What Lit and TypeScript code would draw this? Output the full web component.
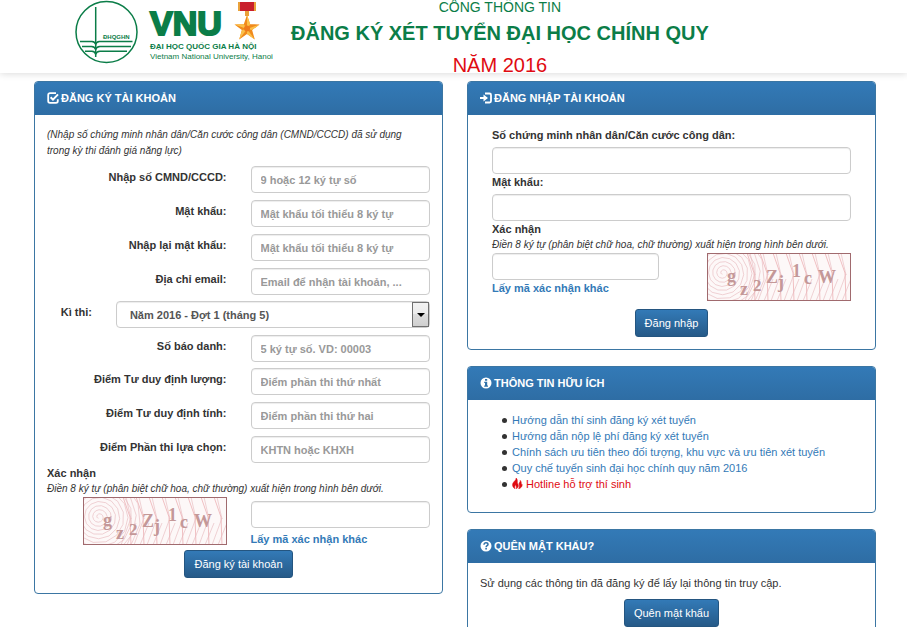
import { LitElement, html, svg, css } from "lit";
import { customElement, property } from "lit/decorators.js";

const icons = {
  check: svg`<path d="M9 1.200H3A1.800 1.800 0 0 0 1.200 3v6A1.800 1.800 0 0 0 3 10.800h6A1.800 1.800 0 0 0 10.800 9V7.200" fill="none" stroke="currentColor" stroke-width="1.800"/><path d="M3.600 5.200l2.400 2.400 5-5.200" fill="none" stroke="currentColor" stroke-width="2"/>`,
  login: svg`<path d="M5 1.500h4.500a1.500 1.500 0 0 1 1.500 1.500v6a1.500 1.500 0 0 1-1.500 1.500H5" fill="none" stroke="currentColor" stroke-width="1.800"/><path d="M0 4.900h3.500V2.500L8 6 3.500 9.500V7.100H0z" fill="currentColor"/>`,
  info: svg`<circle cx="6" cy="6" r="5.500" fill="currentColor"/><path d="M5 2h2.200v1.700H5zM4.200 4.700h3v3.700H8V9.700H4.200V8.400H5V6h-.8z" fill="#3071a9"/>`,
  question: svg`<circle cx="6" cy="6" r="5.500" fill="currentColor"/><path d="M4 4.700C4 3.300 4.800 2.700 6 2.700s2 .7 2 1.700c0 1.300-1.900 1.300-1.900 2.800" fill="none" stroke="#3071a9" stroke-width="1.500"/><path d="M5.300 8h1.600v1.600H5.300z" fill="#3071a9"/>`,
  fire: svg`<path d="M4.500 0C5 2 2.200 3.500 1 5.600 0 7.600.8 10.200 3.400 11.700 2.500 9.700 3 8.600 4.200 7.400c0 1.600.9 2 .5 4.400C7 10.800 7.500 8.400 6.300 6.400 5.200 4.600 6.700 2 4.500 0zM9 2.600c.3 1.700-1.500 2.400-1.300 4 .2 1.500.9 2.600-.4 5.200C10 11 11.600 9 10.900 6.600 10.700 7.300 10.400 7.600 10 7.800 10.300 5.800 10.300 4 9 2.600z" fill="currentColor" stroke="currentColor" stroke-width=".6"/>`,
};

type IconName = keyof typeof icons;

const icon = (name: IconName) =>
  html`<svg class="icon" viewBox="0 0 12 12" aria-hidden="true">${icons[name]}</svg>`;

/* Spiral web that opens out from the left side of the captcha. */
function spiralPath(): string {
  const points: string[] = [];
  for (let i = 4; i < 130; i++) {
    const angle = i * 0.5;
    const radius = i * 0.33;
    const x = 16 + Math.cos(angle) * radius;
    const y = 20 + Math.sin(angle) * radius;
    points.push(`${x.toFixed(1)} ${y.toFixed(1)}`);
  }
  return "M" + points.join("L");
}

const strands = [44, 57, 70, 83, 96, 109, 122, 135];

const captchaLetters = [
  { c: "g", x: 20, y: 29, s: 18 },
  { c: "z", x: 33, y: 42, s: 18 },
  { c: "2", x: 46, y: 38, s: 17 },
  { c: "Z", x: 59, y: 30, s: 18 },
  { c: "j", x: 71, y: 35, s: 18 },
  { c: "1", x: 85, y: 24, s: 18 },
  { c: "c", x: 97, y: 31, s: 18 },
  { c: "W", x: 111, y: 30, s: 18 },
];

@customElement("captcha-image")
class CaptchaImage extends LitElement {
  static styles = css`
    :host { display: block; width: 144px; height: 48px; }
    svg { display: block; width: 100%; height: 100%; }
    text { font-family: "Liberation Serif", serif; font-weight: bold; fill: #c49898; }
    .web { fill: none; stroke: #e6b6ba; stroke-width: 0.6; }
    .strand { fill: none; stroke: #f0bfc2; stroke-width: 1; }
    .frame { fill: none; stroke: #a06a6e; }
  `;
  render() {
    return html`<svg viewBox="0 0 144 48" role="img" aria-label="Captcha">
      <rect width="144" height="48" fill="#fdf8f8" />
      <path class="web" d=${spiralPath()} />
      ${strands.map(
        (x) => svg`<path class="strand" d="M${x - 4} 0l7 20 1 28"/>
          <path class="web" d="M${x - 1} 0l5 22M${x - 6} 48l10-27M${x} 48l9-22"/>`
      )}
      ${captchaLetters.map((l) => svg`<text x=${l.x} y=${l.y} font-size=${l.s}>${l.c}</text>`)}
      <rect class="frame" x="0.5" y="0.5" width="143" height="47" />
    </svg>`;
  }
}

@customElement("info-panel")
class InfoPanel extends LitElement {
  @property() heading = "";
  @property() icon: IconName = "info";
  static styles = css`
    :host { display: block; border: 1px solid #3b76a3; border-radius: 4px; background: #fff; overflow: hidden; }
    .heading {
      display: flex; align-items: center; gap: 2px; margin: 0; padding: 8px 12px 9px;
      font-size: 11px; line-height: 16px; font-weight: bold; color: #fff;
      background: linear-gradient(#337ab7, #2e6da4);
    }
    .icon { width: 12px; height: 12px; flex: none; }
    .body { padding: 12px; }
  `;
  render() {
    return html`<h2 class="heading">${icon(this.icon)}<span>${this.heading}</span></h2>
      <div class="body"><slot></slot></div>`;
  }
}

interface Field { id: string; label: string; hint: string; type?: string }

const accountFields: Field[] = [
  { id: "cmnd", label: "Nhập số CMND/CCCD:", hint: "9 hoặc 12 ký tự số" },
  { id: "matkhau", label: "Mật khẩu:", hint: "Mật khẩu tối thiểu 8 ký tự", type: "password" },
  { id: "nhaplai", label: "Nhập lại mật khẩu:", hint: "Mật khẩu tối thiểu 8 ký tự", type: "password" },
  { id: "email", label: "Địa chỉ email:", hint: "Email để nhận tài khoản, ...", type: "email" },
];
const scoreFields: Field[] = [
  { id: "dinhluong", label: "Điểm Tư duy định lượng:", hint: "Điểm phần thi thứ nhất" },
  { id: "dinhtinh", label: "Điểm Tư duy định tính:", hint: "Điểm phần thi thứ hai" },
  { id: "luachon", label: "Điểm Phần thi lựa chọn:", hint: "KHTN hoặc KHXH" },
];
const links = [
  "Hướng dẫn thí sinh đăng ký xét tuyển",
  "Hướng dẫn nộp lệ phí đăng ký xét tuyển",
  "Chính sách ưu tiên theo đối tượng, khu vực và ưu tiên xét tuyển",
  "Quy chế tuyển sinh đại học chính quy năm 2016",
];

const row = (f: Field) => html`<div class="row">
  <label for=${f.id}>${f.label}</label>
  <input id=${f.id} type=${f.type ?? "text"} placeholder=${f.hint} />
</div>`;

@customElement("app-root")
class AppRoot extends LitElement {
  static styles = css`
    :host {
      display: block; background: #fff; color: #333;
      font-family: "Liberation Sans", Arial, sans-serif; font-size: 11px; line-height: 16px;
    }
    * { box-sizing: border-box; }
    p, h1, ul, form { margin: 0; padding: 0; }
    a { color: #337ab7; text-decoration: none; }

    .top {
      display: flex; align-items: flex-start; gap: 12px; height: 73px; padding-left: 74px;
      box-shadow: 0 1px 7px rgba(0, 0, 0, 0.14); white-space: nowrap; color: #0b7d48;
    }
    .logo { display: flex; gap: 12px; width: 205px; }
    .emblem { width: 64px; height: 64px; flex: none; }
    .emblem text { font-weight: bold; fill: #0b7d48; }
    .names { display: flex; flex-direction: column; }
    .mark { display: flex; gap: 10px; height: 42px; }
    .vnu { font-size: 34px; line-height: 46px; font-weight: bold; -webkit-text-stroke: 2px #0b7d48; }
    .medal { width: 28px; height: 42px; }
    .vn { font-size: 8px; line-height: 10px; font-weight: bold; }
    .en { font-size: 8px; line-height: 10px; }
    .titles { display: flex; flex-direction: column; align-items: center; }
    .portal { font-size: 14px; line-height: 15px; }
    .title { font-size: 20px; line-height: 36px; font-weight: bold; }
    .year { font-size: 20px; line-height: 28px; color: #e00b12; }

    .page {
      display: grid; grid-template-columns: 1fr 1fr; gap: 24px; align-items: start;
      padding: 8px 31px 16px 34px;
    }
    .side { display: grid; gap: 16px; }

    .hint { font-size: 10px; font-style: italic; white-space: nowrap; }
    .group { display: grid; gap: 7px; margin-top: 6px; }
    .group.first { margin-top: 7px; }
    .row { display: grid; grid-template-columns: 1fr 1fr; column-gap: 24px; align-items: start; }
    .row.wide { grid-template-columns: 1fr 7fr; }
    label { font-weight: bold; }
    .row label { text-align: right; padding-top: 3px; white-space: nowrap; }
    .verify { display: block; }
    .group + .verify { margin-top: 2px; }

    input, select {
      display: block; width: 100%; height: 27px; padding: 0 9px; margin: 0;
      border: 1px solid #ccc; border-radius: 4px; background: #fff; color: #555;
      font: bold 11px/16px "Liberation Sans", Arial, sans-serif;
      box-shadow: inset 0 1px 1px rgba(0, 0, 0, 0.075);
    }
    input::placeholder { color: #999; opacity: 1; }
    .pick { position: relative; }
    .pick select { appearance: none; padding-left: 13px; }
    .arrow {
      position: absolute; top: 1px; right: 1px; bottom: 1px; width: 17px; display: grid;
      place-items: center; border: 1px solid #707070; pointer-events: none;
      background: linear-gradient(#f3f3f3, #ebebeb 50%, #ddd 50%, #cfcfcf);
    }
    .arrow::before {
      content: ""; border: 4px solid transparent; border-top-color: #000; border-bottom: 0;
    }

    .another { display: block; font-weight: bold; }
    .right { justify-self: end; }
    .code { padding-top: 4px; }
    .code .another { padding-top: 3px; }
    .login { padding: 0 12px; }
    .login label { display: block; }
    .login input { margin-top: 4px; }
    .login .code-row { display: grid; grid-template-columns: 7fr 6fr; column-gap: 48px; align-items: start; }
    .login .code-row input { margin-top: 0; }
    .actions { display: flex; justify-content: center; padding-top: 8px; }
    .register { padding-bottom: 3px; }
    .register .actions { padding-top: 3px; }

    button {
      height: 28px; padding: 0 9px; border: 1px solid #245580; border-radius: 3px; color: #fff;
      background: linear-gradient(#337ab7, #265a88);
      font: 11px/16px "Liberation Sans", Arial, sans-serif;
    }
    .links { padding: 0 0 8px 22px; list-style: none; }
    .links li { display: flex; align-items: center; gap: 5px; }
    .links li::before { content: ""; width: 5px; height: 5px; border-radius: 50%; background: #333; }
    .hot { color: #e00b12; }
    .icon { width: 11px; height: 11px; vertical-align: -1px; }
  `;

  render() {
    return html`
      <header class="top">
        <div class="logo">
          <svg class="emblem" viewBox="0 0 64 64" role="img" aria-label="ĐHQGHN">
            <g fill="none" stroke="#0b7d48">
              <circle cx="32.500" cy="32" r="30.500" stroke-width="1.500" />
              <path d="M21.700 7v50" stroke-width="1.500" />
              <path d="M6 41.600h12q3 .3 3.700 2.600.7-2.300 3.700-2.600H58.500M8 46.400h9.500q3.500.3 4.200 3.200.7-2.900 4.200-3.200H57M11 51.200h7q3 .3 3.700 3.200.7-2.900 4.200-3.200H53" stroke-width="1.500" />
            </g>
            <text x="29" y="39" font-size="6">ĐHQGHN</text>
          </svg>
          <div class="names">
            <div class="mark">
              <span class="vnu">VNU</span>
              <svg class="medal" viewBox="0 0 28 42" aria-hidden="true">
                <path d="M7 2h16v9H7z" fill="#c9202c" />
                <path d="M6 2h2v9H6zM22 2h2v9h-2z" fill="#e9a13a" />
                <path d="M13 11h4v5h-4z" fill="#e9a13a" />
                <path d="M15 15l3.200 9.200 9.300.2-7.400 5.700 2.700 9.400L15 34l-7.800 5.500 2.700-9.400-7.400-5.700 9.300-.2z" fill="#f08a1c" />
                <path d="M15 15v14l3.200-4.800zM27.500 24.400L15 29l5.100 1.100zM22.800 39.500L15 29v5zM7.200 39.500L15 29l-5.100 1.100zM2.500 24.400L15 29l-3.200-4.800z" fill="#fbc04a" />
                <circle cx="15" cy="28.500" r="3" fill="#ee7a1b" />
              </svg>
            </div>
            <span class="vn">ĐẠI HỌC QUỐC GIA HÀ NỘI</span>
            <span class="en">Vietnam National University, Hanoi</span>
          </div>
        </div>
        <div class="titles">
          <div class="portal">CỔNG THÔNG TIN</div>
          <h1 class="title">ĐĂNG KÝ XÉT TUYỂN ĐẠI HỌC CHÍNH QUY</h1>
          <div class="year">NĂM 2016</div>
        </div>
      </header>

      <main class="page">
        <info-panel icon="check" heading="ĐĂNG KÝ TÀI KHOẢN">
          <form class="register">
            <p class="hint">(Nhập số chứng minh nhân dân/Căn cước công dân (CMND/CCCD) đã sử dụng<br />trong kỳ thi đánh giá năng lực)</p>
            <div class="group first">${accountFields.map(row)}</div>
            <div class="group">
              <div class="row wide">
                <label for="kithi">Kì thi:</label>
                <div class="pick">
                  <select id="kithi"><option>Năm 2016 - Đợt 1 (tháng 5)</option></select>
                  <span class="arrow"></span>
                </div>
              </div>
              ${row({ id: "sobaodanh", label: "Số báo danh:", hint: "5 ký tự số. VD: 00003" })}
            </div>
            <div class="group">${scoreFields.map(row)}</div>
            <label class="verify" for="ma1">Xác nhận</label>
            <p class="hint">Điền 8 ký tự (phân biệt chữ hoa, chữ thường) xuất hiện trong hình bên dưới.</p>
            <div class="row">
              <captcha-image class="right"></captcha-image>
              <div class="code">
                <input id="ma1" type="text" />
                <a class="another" href="#">Lấy mã xác nhận khác</a>
              </div>
            </div>
            <div class="actions"><button type="button">Đăng ký tài khoản</button></div>
          </form>
        </info-panel>

        <div class="side">
          <info-panel icon="login" heading="ĐĂNG NHẬP TÀI KHOẢN">
            <form class="login">
              <label for="cccd">Số chứng minh nhân dân/Căn cước công dân:</label>
              <input id="cccd" type="text" />
              <label for="mk2">Mật khẩu:</label>
              <input id="mk2" type="password" />
              <label for="ma2">Xác nhận</label>
              <p class="hint">Điền 8 ký tự (phân biệt chữ hoa, chữ thường) xuất hiện trong hình bên dưới.</p>
              <div class="code-row">
                <div>
                  <input id="ma2" type="text" />
                  <a class="another" href="#">Lấy mã xác nhận khác</a>
                </div>
                <captcha-image class="right"></captcha-image>
              </div>
              <div class="actions"><button type="button">Đăng nhập</button></div>
            </form>
          </info-panel>

          <info-panel icon="info" heading="THÔNG TIN HỮU ÍCH">
            <ul class="links">
              ${links.map((t) => html`<li><a href="#">${t}</a></li>`)}
              <li><a class="hot" href="#">${icon("fire")} Hotline hỗ trợ thí sinh</a></li>
            </ul>
          </info-panel>

          <info-panel icon="question" heading="QUÊN MẬT KHẨU?">
            <p>Sử dụng các thông tin đã đăng ký để lấy lại thông tin truy cập.</p>
            <div class="actions"><button type="button">Quên mật khẩu</button></div>
          </info-panel>
        </div>
      </main>
    `;
  }
}
